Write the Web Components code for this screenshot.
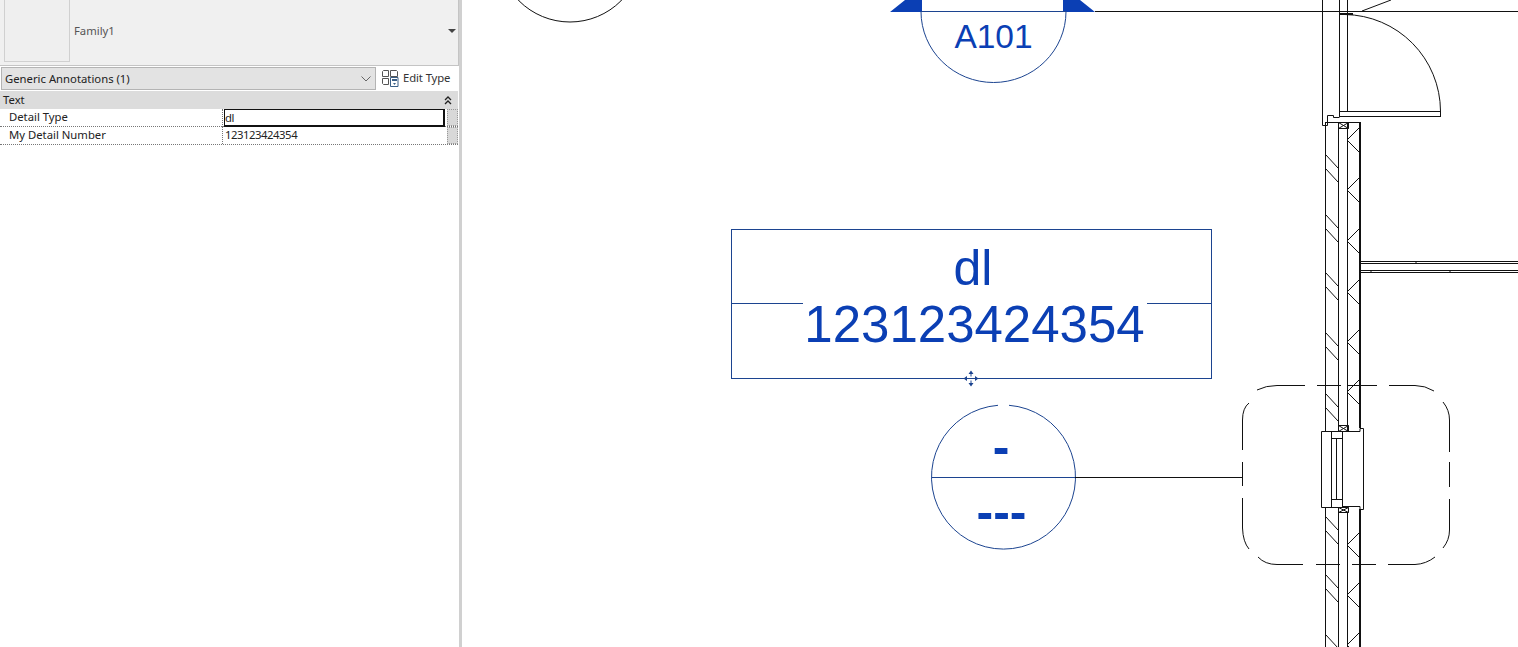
<!DOCTYPE html>
<html>
<head>
<meta charset="utf-8">
<title>Family1</title>
<style>
    html, body { margin: 0; height: 100%; background: #fff; overflow: hidden; }
    body { display: flex; width: 1518px; height: 647px; font-family: "Noto Sans", "Open Sans", sans-serif; }
</style>
</head>
<body>
<props-panel>
    <type-preview slot="preview" name="Family1"></type-preview>
    <type-selector slot="selector" label="Generic Annotations (1)"></type-selector>
    <prop-group slot="group" title="Text">
        <prop-row label="Detail Type" value="dl" active></prop-row>
        <prop-row label="My Detail Number" value="123123424354"></prop-row>
    </prop-group>
</props-panel>
<plan-canvas></plan-canvas>

<script>
class PropsPanel extends HTMLElement {
    constructor() {
        super();
        this.attachShadow({ mode: 'open' });
        this.shadowRoot.innerHTML = `
            <style>
                :host {
                    display: flex;
                    flex-direction: column;
                    flex: 0 0 462px;
                    height: 647px;
                    box-sizing: border-box;
                    background: #fff;
                    border-right: 3px solid #d0d0d0;
                }
            </style>
            <slot name="preview"></slot>
            <slot name="selector"></slot>
            <slot name="group"></slot>
        `;
    }
}

class TypePreview extends HTMLElement {
    constructor() {
        super();
        this.attachShadow({ mode: 'open' });
        this.shadowRoot.innerHTML = `
            <style>
                :host {
                    display: flex;
                    align-items: stretch;
                    box-sizing: border-box;
                    height: 66px;
                    padding: 0 4px 3px 4px;
                    background: #f0f0f0;
                    border-bottom: 1px solid #c4c4c4;
                    border-right: 1px solid #c4c4c4;
                    font-size: 11.3px;
                    color: #555;
                }
                .thumb {
                    width: 66px;
                    box-sizing: border-box;
                    border: 1px solid #d0d0d0;
                    border-top: 0;
                    background: #efefef;
                }
                .name { flex: 1; padding-left: 4px; align-self: center; margin-top: -1px; }
                .arrow {
                    align-self: center;
                    width: 0; height: 0;
                    margin: 0 -2px 0 0;
                    border-left: 4px solid transparent;
                    border-right: 4px solid transparent;
                    border-top: 4px solid #444;
                }
            </style>
            <div class="thumb"></div>
            <div class="name"></div>
            <div class="arrow"></div>
        `;
        this.shadowRoot.querySelector('.name').textContent = this.getAttribute('name');
    }
}

class TypeSelector extends HTMLElement {
    constructor() {
        super();
        this.attachShadow({ mode: 'open' });
        this.shadowRoot.innerHTML = `
            <style>
                :host {
                    display: flex;
                    height: 23px;
                    margin-top: 1px;
                    padding-left: 1px;
                    font-size: 11.3px;
                    color: #222;
                }
                .combo {
                    display: flex;
                    align-items: center;
                    justify-content: space-between;
                    box-sizing: border-box;
                    width: 375px;
                    padding: 0 3px 0 3px;
                    background: #e3e3e3;
                    border: 1px solid #b4b4b4;
                }
                .edit {
                    display: flex;
                    align-items: center;
                    gap: 4px;
                    padding-left: 6px;
                    margin-top: -2px;
                    color: #333;
                    letter-spacing: -.1px;
                }
            </style>
            <div class="combo">
                <span class="label"></span>
                <svg width="12" height="8" viewBox="0 0 12 8"><path d="M1.5 1.5 6 6l4.5-4.5" fill="none" stroke="#666"/></svg>
            </div>
            <div class="edit">
                <svg width="17" height="18" viewBox="0 0 17 18">
                    <g fill="none" stroke="#555">
                        <path d="M1.500 1.500h5v6h-6v-5zM.5 9.500h6v6h-5l-1-1zM8.500 1.500h6l1 1v5h-7z"/>
                        <path d="M8.500 8.500h7.500v9H8.500z" stroke="#3a5f86"/>
                    </g>
                    <path d="M10 10h5v2h-5z" fill="#3a5f86"/>
                    <path d="M11 14h3l-1.500 2z" fill="#3a5f86"/>
                </svg>
                <span>Edit Type</span>
            </div>
        `;
        this.shadowRoot.querySelector('.label').textContent = this.getAttribute('label');
    }
}

class PropGroup extends HTMLElement {
    constructor() {
        super();
        this.attachShadow({ mode: 'open' });
        this.shadowRoot.innerHTML = `
            <style>
                :host { display: block; margin-top: 1px; margin-right: 1px; font-size: 11.3px; color: #222; }
                .head {
                    display: flex;
                    align-items: center;
                    justify-content: space-between;
                    height: 18px;
                    padding: 0 6px 0 3px;
                    background: #dcdcdc;
                }
                .title { margin-top: -2px; }
            </style>
            <div class="head">
                <span class="title"></span>
                <svg width="8" height="9" viewBox="0 0 8 9"><path d="M1 4 4 1l3 3M1 8l3-3 3 3" fill="none" stroke="#222" stroke-width="1.300"/></svg>
            </div>
            <slot></slot>
        `;
        this.shadowRoot.querySelector('.title').textContent = this.getAttribute('title');
    }
}

class PropRow extends HTMLElement {
    constructor() {
        super();
        this.attachShadow({ mode: 'open' });
        this.shadowRoot.innerHTML = `
            <style>
                :host {
                    display: grid;
                    grid-template-columns: 223px 222px 13px;
                    height: 18px;
                    box-sizing: border-box;
                    border-bottom: 1px dotted #777;
                    line-height: 16px;
                }
                .label { padding-left: 9px; border-right: 1px dotted #777; }
                .value { padding-left: 2px; letter-spacing: -.45px; box-sizing: border-box; }
                :host([active]) .value {
                    height: 18px;
                    margin-left: 1px;
                    padding-left: 0;
                    border: 2px solid #111;
                    border-width: 1px 2px 2px 1px;
                }
                .btn {
                    box-sizing: border-box;
                    height: 17px;
                    margin-left: 2px;
                    background: #d8d8d8;
                    border: 1px dotted #999;
                }
            </style>
            <div class="label"></div>
            <div class="value"></div>
            <div class="btn"></div>
        `;
        this.shadowRoot.querySelector('.label').textContent = this.getAttribute('label');
        this.shadowRoot.querySelector('.value').textContent = this.getAttribute('value');
    }
}

// wall hatch is repeated so it gets built in a loop
function wallHatch() {
    let d = '';
    [155, 215, 273, 333, 394, 517, 575, 635].forEach(y => {
        d += `M1326 ${y}l12 13M1326 ${y + 14}l12 13`;
    });
    [140, 190, 241, 292, 342, 392, 545, 595, 645].forEach(y => {
        d += `M1360 ${y - 13}L1348 ${y - 1}M1348 ${y + 1}L1360 ${y + 13}`;
    });
    return d;
}

class PlanCanvas extends HTMLElement {
    constructor() {
        super();
        this.attachShadow({ mode: 'open' });
        const blue = '#1c4490';
        this.shadowRoot.innerHTML = `
            <style>
                :host { display: block; flex: 1; height: 647px; background: #fff; }
                svg { display: block; }
                text { font-family: "Liberation Sans", Arial, sans-serif; fill: #0b3fb4; text-anchor: middle; }
                .ink { fill: none; stroke: #111; stroke-width: 1; }
                .tag { fill: none; stroke: ${blue}; stroke-width: 1; }
            </style>
            <svg width="1056" height="647" viewBox="462 0 1056 647">
                <!-- neighbouring tag, only its bottom shows -->
                <circle class="ink" cx="570" cy="-50" r="72"/>

                <!-- section head A101 -->
                <path d="M890 12 905 0h17v12zM1063 0h17l15 12h-32z" fill="#0b3fb4"/>
                <path class="tag" d="M921 11.500h145M921 11.500a72.500 71 0 0 0 145 0"/>
                <text x="993.500" y="48" font-size="33.500">A101</text>
                <path class="ink" d="M1095 11.500H1518"/>

                <!-- selected annotation -->
                <rect class="tag" x="731.500" y="229.500" width="480" height="149"/>
                <path class="tag" d="M732 303.500h71M1147 303.500h64"/>
                <text x="973" y="284.500" font-size="50">dl</text>
                <text x="974.500" y="341.500" font-size="51">123123424354</text>
                <g fill="${blue}">
                    <path d="M971 370.500l-2.500 3.500h5zM971 386.500l-2.500-3.500h5zM963.500 378.500l3.500-2.500v5zM978.500 378.500l-3.500-2.500v5z"/>
                    <path d="M971 374v2.500M971 380.500v3" stroke="${blue}" fill="none"/>
                </g>

                <!-- callout tag -->
                <path class="tag" d="M998 405.300A72 72 0 1 0 1009 405.300M932 477.500h143"/>
                <text x="1001" y="464" font-size="50" font-weight="700">-</text>
                <text x="1001.500" y="529" font-size="50" font-weight="700">---</text>
                <path class="ink" d="M1075 477.500h167"/>

                <!-- callout boundary -->
                <path class="ink" d="M1242.500 450V420Q1242.500 408 1249 403M1242.500 462v24M1242.500 498v30Q1243 542 1249 549M1258 557Q1265 564.500 1277 564.500H1303M1316 564.500h24M1352 564.500h24M1388 564.500h27Q1426 564 1435 557M1443 548Q1449.500 540 1449.500 530V499M1449.500 487V462M1449.500 452V420Q1449.500 410 1443 402M1434 391Q1425 385.500 1415 385.500H1389M1377 385.500h-29M1341 385.500h-24M1305 385.500H1277Q1266 385.500 1257 390"/>

                <!-- upper wall and door -->
                <path class="ink" d="M1322.500 0V125.500H1327.500V115.500H1333.500V117.500H1339.500M1339.500 0V111M1347.500 0V111"/>
                <rect class="ink" x="1339.500" y="111.500" width="101" height="5"/>
                <path class="ink" d="M1440.500 111A97 97 0 0 0 1345 14.500"/>
                <path class="ink" d="M1362 11 1391 0"/>
                <path d="M1340 13h13v2h-13z" fill="#111"/>

                <!-- lower wall -->
                <path class="ink" d="M1326 122.500H1360M1325.500 122V431M1338.500 122V431M1347.500 122V431M1325.500 507V647M1338.500 512V647M1347.500 512V647"/>
                <path d="M1360 122v306M1360 509V647" stroke="#111" stroke-width="2" fill="none"/>
                <path class="ink" d="${wallHatch()}"/>
                <path class="ink" d="M1338.500 122.500h10v6h-10zM1338.500 122.500l10 6M1348.500 122.500l-10 6M1338.500 425.500h10v6h-10zM1338.500 425.500l10 6M1348.500 425.500l-10 6M1338.500 507.500h10v5h-10zM1338.500 507.500l10 5M1348.500 507.500l-10 5"/>

                <!-- window -->
                <path class="ink" d="M1321.500 431.500h21v76h-21zM1331.500 431.500v76M1331.500 438.500h11M1331.500 499.500h11M1336.500 438.500v61M1342.500 431.500h17.500V428.500h3.500V509.500H1360V506.500h-17.500"/>

                <!-- interior wall -->
                <path class="ink" d="M1361 261.500H1518M1361 263.500H1518M1361 270.500H1518M1361 272.500H1518M1416 261v2M1371 270v2M1450 270v2"/>
            </svg>
        `;
    }
}

customElements.define('props-panel', PropsPanel);
customElements.define('type-preview', TypePreview);
customElements.define('type-selector', TypeSelector);
customElements.define('prop-group', PropGroup);
customElements.define('prop-row', PropRow);
customElements.define('plan-canvas', PlanCanvas);
</script>
</body>
</html>
